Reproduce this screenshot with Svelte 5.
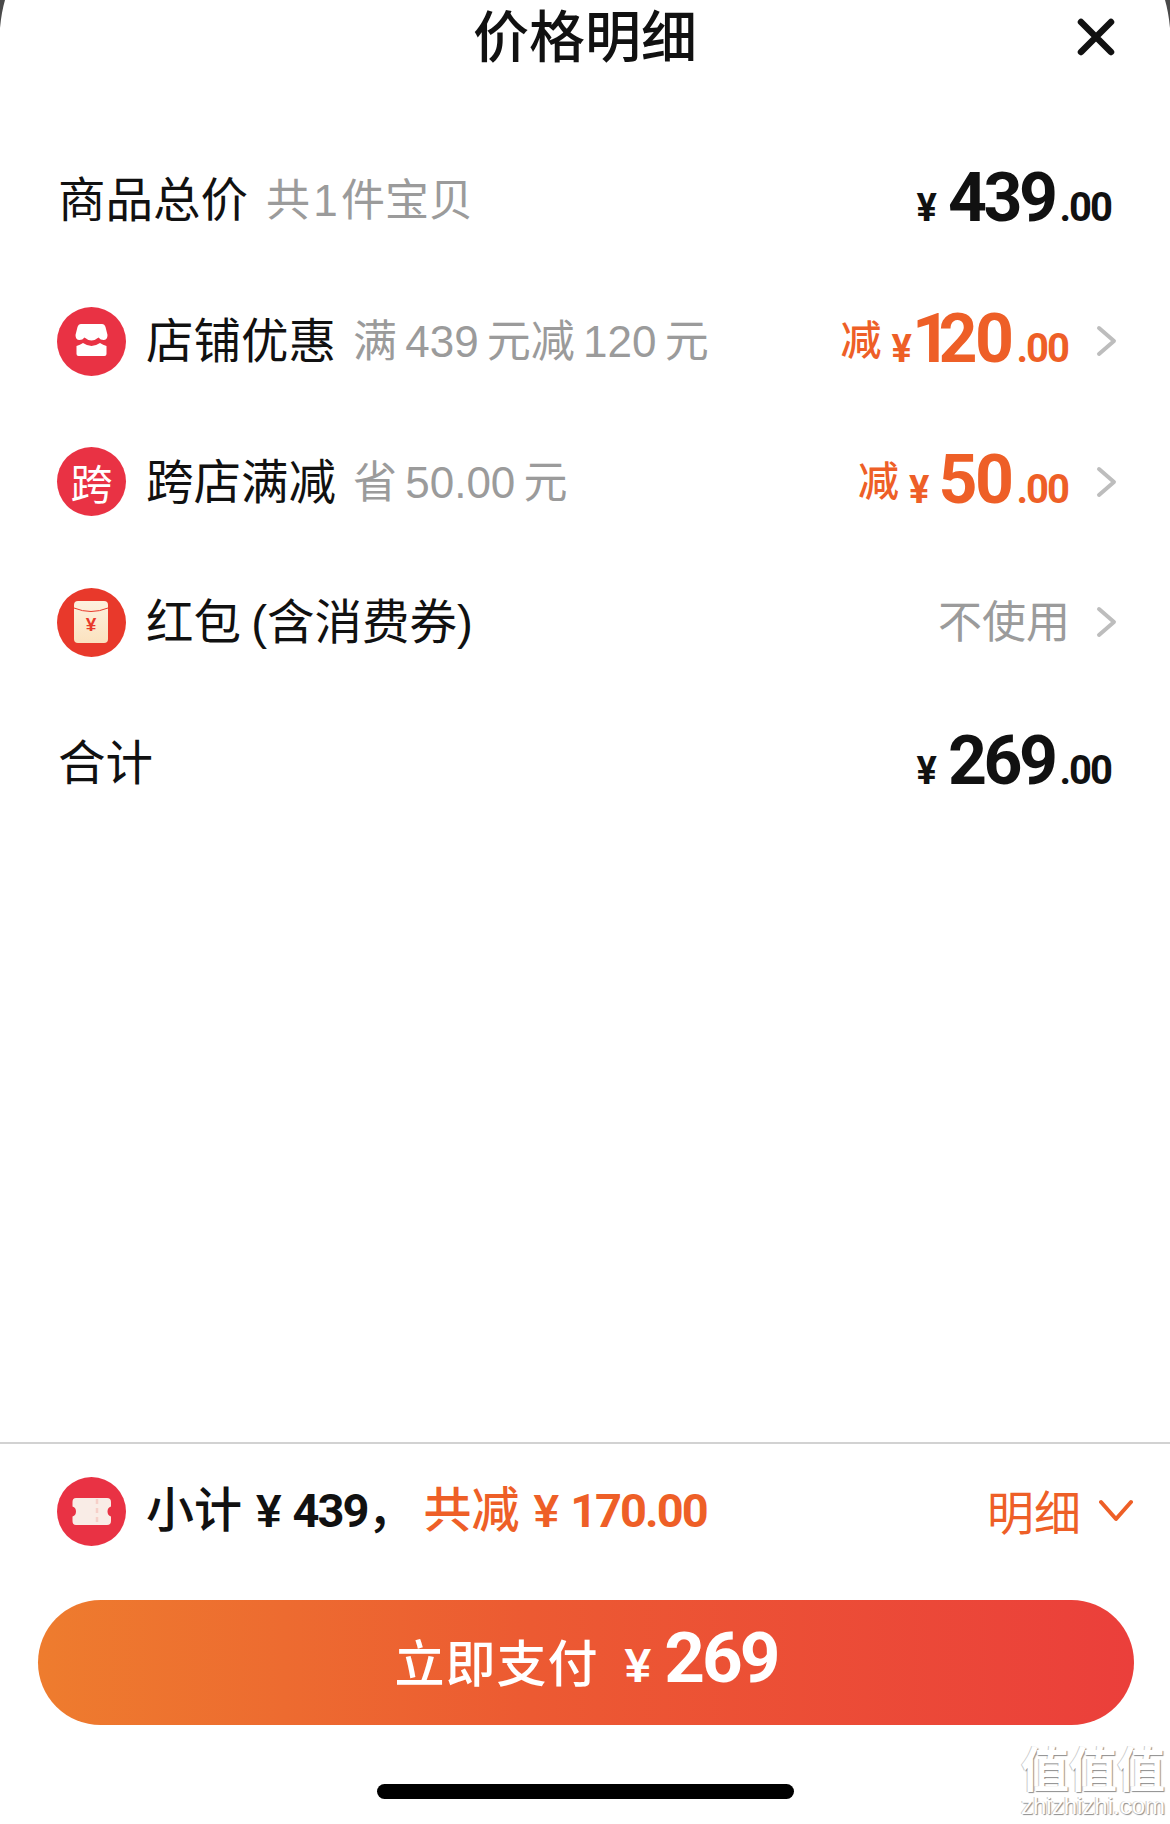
<script lang="ts">
  const rows = [
    { label: '店铺优惠', icon: 'store', sub: '满 439 元减 120 元', lead: '1', amount: '20' },
    { label: '跨店满减', icon: 'kua', sub: '省 50.00 元', lead: '', amount: '50' },
    { label: '红包 (含消费券)', icon: 'packet', sub: '', lead: '', amount: '' }
  ];
</script>

<div class="sheet">
  <svg class="corner left" viewBox="0 0 5 30"><path d="M0 0H5Q1.5 12 0 28Z" /></svg>
  <svg class="corner right" viewBox="0 0 5 30"><path d="M5 0H0Q3.5 12 5 28Z" /></svg>

  <header class="head">
    <h1>价格明细</h1>
    <svg class="close" viewBox="0 0 38 38">
      <path d="M4 4L34 34M34 4L4 34" />
    </svg>
  </header>

  <section class="list">
    <div class="row">
      <span class="label plain">商品总价</span>
      <span class="sub first">共 1 件宝贝</span>
      <div class="price black end">
        <span class="yen">¥</span><span class="big">439</span><span class="cents">.00</span>
      </div>
    </div>

    {#each rows as row}
      <div class="row">
        {#if row.icon === 'store'}
          <svg class="badge" viewBox="0 0 69 69">
            <circle cx="34.5" cy="34.5" r="34.5" fill="#e93244" />
            <path fill="#fff" d="M24 17H45Q47.5 17 48.5 20L50.5 28Q50.5 33 46.5 33Q43.5 33 41.5 30.5Q38 33.5 34.5 33.5Q31 33.5 27.5 30.5Q25.5 33 22.5 33Q18.5 33 18.5 28L20.5 20Q21.5 17 24 17Z" />
            <path fill="#fff" d="M19.5 39Q23 38 26 36Q30.5 39 34.5 39Q38.5 39 43 36Q46 38 49.5 39V47Q49.5 49 47.5 49H21.5Q19.5 49 19.5 47Z" />
          </svg>
        {:else if row.icon === 'kua'}
          <span class="badge kua">跨</span>
        {:else}
          <svg class="badge" viewBox="0 0 69 69">
            <defs>
              <linearGradient id="cream" x1="0" y1="0" x2="0" y2="1">
                <stop offset="0" stop-color="#fdf1de" />
                <stop offset="1" stop-color="#fbe2bf" />
              </linearGradient>
            </defs>
            <circle cx="34.5" cy="34.5" r="34.5" fill="#e8392b" />
            <rect x="17" y="13" width="34" height="42" rx="4" fill="url(#cream)" />
            <path d="M17 20Q34 27 51 20" fill="none" stroke="#e8392b" stroke-width="1" />
            <text class="packet-yen" x="34" y="43" text-anchor="middle">¥</text>
          </svg>
        {/if}
        <span class="label">{row.label}</span>
        {#if row.sub}<span class="sub">{row.sub}</span>{/if}
        {#if row.amount}
          <div class="price orange">
            <span class="jian">减</span><span class="yen" class:tight={row.lead}>¥</span>{#if row.lead}<span class="big one">{row.lead}</span>{/if}<span class="big">{row.amount}</span><span class="cents">.00</span>
          </div>
        {:else}
          <span class="unused">不使用</span>
        {/if}
        <svg class="chevron" viewBox="0 0 21 32"><path d="M3 3L18 16L3 29" /></svg>
      </div>
    {/each}

    <div class="row">
      <span class="label plain">合计</span>
      <div class="price black end">
        <span class="yen">¥</span><span class="big">269</span><span class="cents">.00</span>
      </div>
    </div>
  </section>

  <footer class="foot">
    <div class="summary">
      <svg class="badge" viewBox="0 0 69 69">
        <circle cx="34.5" cy="34.5" r="34.5" fill="#e93244" />
        <path fill="#f9ece6" d="M19 21H50Q54 21 54 25V29.5Q50.5 30.5 50.5 34.5Q50.5 38.5 54 39.5V44Q54 48 50 48H19Q15.5 48 15.5 44V39.5Q19 38.5 19 34.5Q19 30.5 15.5 29.5V25Q15.5 21 19 21Z" />
        <path d="M40 22V48" stroke="#f6cfc8" stroke-width="2.5" stroke-dasharray="5 4" />
      </svg>
      <span class="total">小计<span class="yen-mid">¥</span><span class="num">439</span>，</span>
      <span class="saved">共减<span class="yen-mid">¥</span><span class="num">170.00</span></span>
      <span class="detail">明细</span>
      <svg class="down" viewBox="0 0 34 24"><path d="M2 3L17 20L32 3" /></svg>
    </div>

    <button class="pay">
      <span class="pay-label">立即支付</span><span class="pay-yen">¥</span><span class="pay-num">269</span>
    </button>

    <div class="home"></div>
  </footer>

  <div class="watermark">
    <span class="wm-cn">值值值</span>
    <span class="wm-en">zhizhizhi.com</span>
  </div>
</div>

<style>
  :global(body) {
    margin: 0;
    background: #fff;
  }

  .sheet {
    position: relative;
    width: 1170px;
    height: 1824px;
    display: flex;
    flex-direction: column;
    overflow: hidden;
    background: #fff;
    color: #111;
    font-family: "Liberation Sans", "Noto Sans CJK SC", sans-serif;
  }

  .corner {
    position: absolute;
    top: 0;
    width: 5px;
    height: 30px;
    fill: #4a4a4a;
  }
  .corner.left { left: 0; }
  .corner.right { right: 0; }

  .head {
    height: 130px;
    position: relative;
    flex-shrink: 0;
  }

  h1 {
    margin: 0;
    text-align: center;
    font-size: 56px;
    line-height: 66px;
    font-weight: 500;
    font-family: "Noto Sans CJK SC", sans-serif;
  }

  .close {
    position: absolute;
    left: 1077px;
    top: 18px;
    width: 38px;
    height: 38px;
    fill: none;
    stroke: #111;
    stroke-width: 6.5;
    stroke-linecap: round;
  }

  .row {
    height: 140.7px;
    padding: 0 53px 0 57px;
    display: flex;
    align-items: center;
  }

  .badge {
    width: 69px;
    height: 69px;
    flex-shrink: 0;
    margin-right: 20px;
  }

  .kua {
    border-radius: 50%;
    background: #e93244;
    color: #fff;
    font-size: 42px;
    line-height: 69px;
    text-align: center;
    font-family: "Noto Sans CJK SC", sans-serif;
  }

  .packet-yen {
    font-size: 19px;
    font-weight: 700;
    fill: #e8392b;
    font-family: "Liberation Sans", sans-serif;
  }

  .label {
    font-size: 47.5px;
    line-height: 60px;
    word-spacing: -3px;
    margin-top: 2px;
  }
  .label.plain { margin-left: 1px; }

  .sub {
    margin-left: 17px;
    margin-top: 2px;
    font-size: 44px;
    line-height: 60px;
    color: #9b9b9b;
    word-spacing: -4px;
  }
  .sub.first {
    margin-left: 18px;
    word-spacing: -9px;
  }

  .price {
    margin-left: auto;
    margin-bottom: 4px;
    display: flex;
    align-items: baseline;
    font-family: "Roboto", sans-serif;
    font-weight: 700;
  }
  .price.black { color: #111; }
  .price.orange { color: #ee5f27; }
  .price.end { margin-right: 6px; }

  .yen {
    font-size: 38px;
    margin-right: 9px;
  }
  .yen.tight { margin-right: 0; }
  .black .yen { margin-right: 11px; }

  .big {
    font-size: 68px;
    letter-spacing: -2.5px;
  }
  .black .big { letter-spacing: -3.5px; }
  .big.one { margin-right: -10px; }

  .cents {
    font-size: 40px;
    margin-left: 5px;
    letter-spacing: -2px;
  }

  .jian {
    align-self: center;
    margin-bottom: 4px;
    font-family: "Noto Sans CJK SC", sans-serif;
    font-size: 41px;
    font-weight: 500;
    margin-right: 10px;
  }

  .unused {
    margin-left: auto;
    margin-right: -2px;
    margin-top: 2px;
    font-size: 44px;
    line-height: 60px;
    color: #9b9b9b;
  }

  .chevron {
    width: 21px;
    height: 32px;
    margin-left: 28px;
    fill: none;
    stroke: #bdbdbd;
    stroke-width: 4;
    stroke-linecap: round;
    stroke-linejoin: round;
  }

  .foot {
    margin-top: auto;
    border-top: 2px solid #d2d2d2;
  }

  .summary {
    height: 134px;
    padding: 0 37px 0 57px;
    display: flex;
    align-items: center;
    font-size: 48px;
    font-weight: 500;
    box-sizing: border-box;
  }

  .total,
  .saved {
    font-family: "Noto Sans CJK SC", sans-serif;
    margin-bottom: 11px;
  }
  .saved {
    color: #ee5f27;
    margin-left: 8px;
  }

  .yen-mid {
    margin: 0 11px 0 14px;
    font-family: "Liberation Sans", sans-serif;
    font-weight: 700;
    font-size: 46px;
  }

  .num {
    font-family: "Roboto", sans-serif;
    font-weight: 700;
    font-size: 47px;
    letter-spacing: -2px;
  }

  .detail {
    margin-left: auto;
    margin-bottom: 3px;
    color: #ee5f27;
    font-size: 47px;
    font-weight: 400;
  }

  .down {
    width: 34px;
    height: 24px;
    margin-left: 18px;
    fill: none;
    stroke: #ee5f27;
    stroke-width: 4;
    stroke-linecap: round;
    stroke-linejoin: round;
  }

  .pay {
    display: flex;
    align-items: baseline;
    justify-content: center;
    box-sizing: border-box;
    width: 1096px;
    height: 125px;
    margin: 22px 0 0 38px;
    padding: 16px 0 0;
    border: none;
    border-radius: 63px;
    background: linear-gradient(90deg, #ee7c2e 0%, #ec5a32 45%, #eb3f3b 100%);
    color: #fff;
  }

  .pay-label {
    font-family: "Noto Sans CJK SC", sans-serif;
    font-size: 50px;
    font-weight: 500;
    letter-spacing: 1px;
  }

  .pay-yen {
    font-family: "Liberation Sans", sans-serif;
    font-size: 48px;
    font-weight: 700;
    margin: 0 13px 0 26px;
  }

  .pay-num {
    font-family: "Roboto", sans-serif;
    font-size: 71px;
    font-weight: 700;
    letter-spacing: -3px;
  }

  .home {
    width: 417px;
    height: 15px;
    margin: 59px 0 25px 377px;
    border-radius: 8px;
    background: #000;
  }

  .watermark {
    position: absolute;
    left: 1018px;
    top: 1738px;
    width: 150px;
    display: flex;
    flex-direction: column;
    align-items: center;
    color: #fff;
    text-shadow: 1px 1px 1px #8c8c8c, -1px 0 0 #ccc;
  }

  .wm-cn {
    font-family: "Noto Sans CJK SC", sans-serif;
    font-size: 48px;
    line-height: 56px;
    font-weight: 700;
  }

  .wm-en {
    font-size: 24px;
    line-height: 24px;
    font-family: "Liberation Sans", sans-serif;
  }
</style>
